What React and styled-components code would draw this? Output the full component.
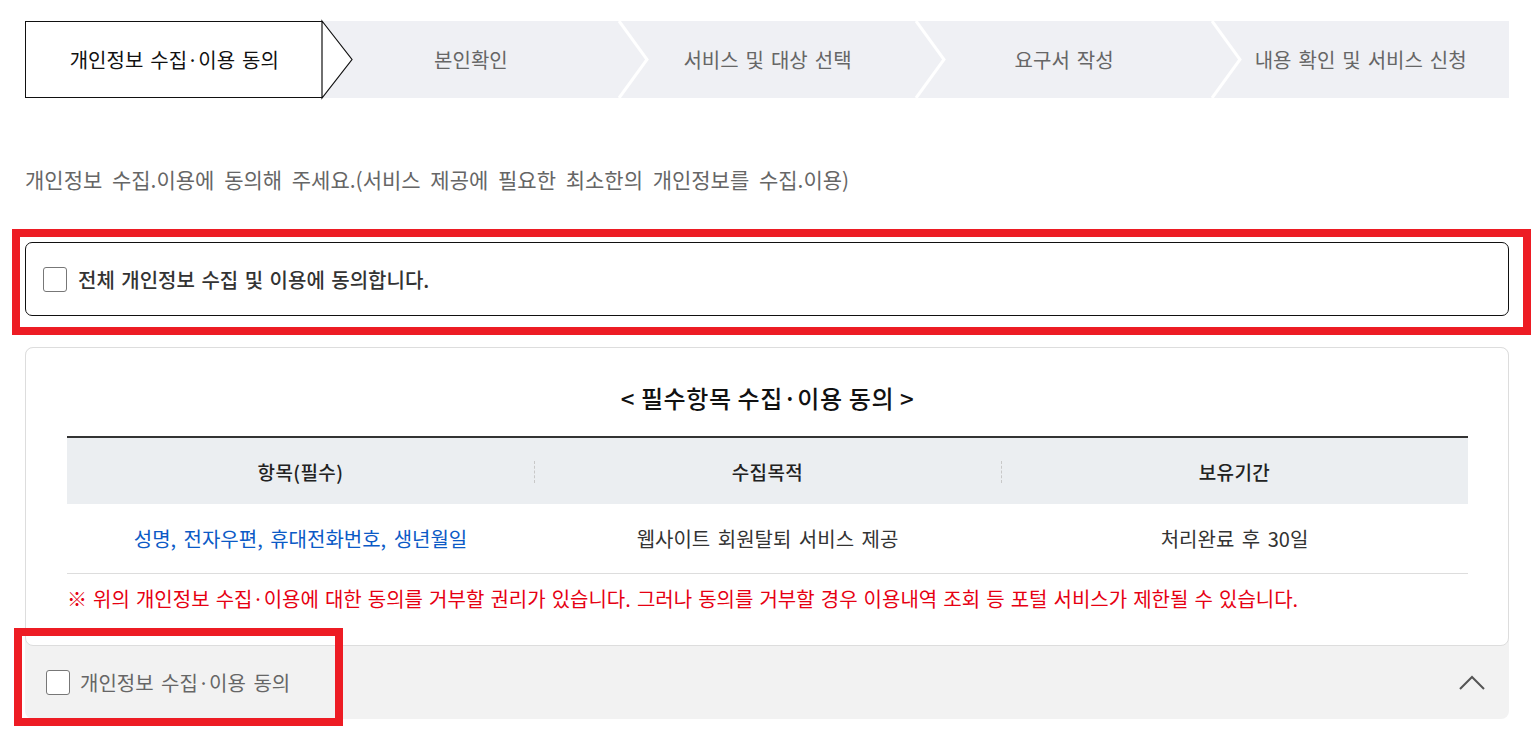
import React from "react";
import styled, { createGlobalStyle } from "styled-components";

const GlobalStyle = createGlobalStyle`
  html, body { margin: 0; padding: 0; background: #fff; }
  body { font-family: "Noto Sans CJK KR", "Noto Sans", sans-serif; color: #333; }
  * { box-sizing: border-box; }
`;

const Root = styled.div`
  position: relative;
  width: 1539px;
  padding: 21px 30px 11px 25px;
`;

const Steps = styled.ol`
  display: flex;
  margin: 0;
  padding: 0;
  list-style: none;
  height: 77px;
  background: #eff0f4;
`;

const Step = styled.li`
  position: relative;
  flex: 1;
  display: flex;
  align-items: center;
  justify-content: center;
  font-size: 20px;
  letter-spacing: 0;
  word-spacing: 2.5px;
  color: ${(p) => (p.$active ? "#111" : "#666")};
  background: ${(p) => (p.$active ? "#fff" : "transparent")};
  border: ${(p) => (p.$active ? "1px solid #111" : "none")};
  border-right: none;
`;

const Chevron = styled.svg`
  position: absolute;
  top: ${(p) => (p.$active ? "-1px" : "0")};
  right: -31px;
  width: 32px;
  height: 77px;
  z-index: 2;
  overflow: visible;
`;

const Intro = styled.p`
  margin: 67px 0 0;
  font-size: 21px;
  line-height: 28px;
  letter-spacing: 0;
  word-spacing: 5px;
  color: #666;
`;

const AllBox = styled.label`
  display: flex;
  align-items: center;
  gap: 11px;
  margin-top: 49px;
  height: 74px;
  padding: 0 17px;
  border: 1px solid #111;
  border-radius: 7px;
  font-size: 20px;
  font-weight: 500;
  letter-spacing: 0;
  word-spacing: 2px;
  color: #333;
`;

const Box = styled.span`
  flex: none;
  width: 24px;
  height: 25px;
  border: 1px solid #777;
  border-radius: 3px;
  background: #fff;
`;

const Accordion = styled.section`
  margin-top: 31px;
  background: #f2f2f2;
  border-radius: 8px;
`;

const Card = styled.div`
  background: #fff;
  border: 1px solid #ddd;
  border-radius: 8px;
  padding: 35px 40px 32px 41px;
`;

const Title = styled.h3`
  margin: 0;
  text-align: center;
  font-size: 24px;
  line-height: 30px;
  font-weight: 500;
  letter-spacing: 0.6px;
  color: #111;
`;

const Table = styled.div`
  margin-top: 23px;
  border-top: 2px solid #333;
`;

const Row = styled.div`
  display: grid;
  grid-template-columns: 1fr 1fr 1fr;
  height: ${(p) => (p.$head ? "66px" : "70px")};
  background: ${(p) => (p.$head ? "#ebeef1" : "#fff")};
  border-bottom: ${(p) => (p.$head ? "none" : "1px solid #ddd")};
`;

const Cell = styled.div`
  position: relative;
  display: flex;
  align-items: center;
  justify-content: center;
  font-size: ${(p) => (p.$head ? "19px" : "20px")};
  font-weight: ${(p) => (p.$head ? 500 : 400)};
  letter-spacing: ${(p) => (p.$head ? "0.4px" : "0")};
  word-spacing: 3px;
  color: ${(p) => (p.$blue ? "#0b5ac6" : p.$head ? "#222" : "#333")};

  ${(p) =>
    p.$divider &&
    `&::before {
      content: "";
      position: absolute;
      left: 0;
      top: 23px;
      height: 22px;
      border-left: 1px dashed #c8c8c8;
    }`}
`;

const Note = styled.p`
  margin: 11px 0 0;
  font-size: 20px;
  line-height: 28px;
  letter-spacing: 0;
  word-spacing: 1.6px;
  color: #e60012;
`;

const AccHeader = styled.div`
  display: flex;
  align-items: center;
  height: 73px;
  padding: 0 24px 0 21px;
  gap: 10px;
  font-size: 20px;
  letter-spacing: 0;
  word-spacing: 3px;
  color: #666;
`;

const AccLabel = styled.span`
  flex: 1;
`;

const Mark = styled.div`
  position: absolute;
  left: ${(p) => p.$x}px;
  top: ${(p) => p.$y}px;
  width: ${(p) => p.$w}px;
  height: ${(p) => p.$h}px;
  border: 8px solid #ed1c24;
  pointer-events: none;
`;

const steps = [
  "개인정보 수집·이용 동의",
  "본인확인",
  "서비스 및 대상 선택",
  "요구서 작성",
  "내용 확인 및 서비스 신청",
];

export default function App() {
  return (
    <>
      <GlobalStyle />
      <Root>
        <Steps>
          {steps.map((s, i) => (
            <Step key={s} $active={i === 0}>
              {s}
              {i < steps.length - 1 &&
                (i === 0 ? (
                  <Chevron $active viewBox="0 0 32 77">
                    <polygon points="0,0 30,38.5 0,77" fill="#fff" stroke="#111" strokeWidth="1.2" />
                  </Chevron>
                ) : (
                  <Chevron viewBox="0 0 32 77">
                    <polyline points="1,0 29,38.5 1,77" fill="none" stroke="#fff" strokeWidth="3" />
                  </Chevron>
                ))}
            </Step>
          ))}
        </Steps>

        <Intro>개인정보 수집.이용에 동의해 주세요.(서비스 제공에 필요한 최소한의 개인정보를 수집.이용)</Intro>

        <AllBox>
          <Box />
          전체 개인정보 수집 및 이용에 동의합니다.
        </AllBox>

        <Accordion>
          <Card>
            <Title>&lt; 필수항목 수집·이용 동의 &gt;</Title>
            <Table>
              <Row $head>
                <Cell $head>항목(필수)</Cell>
                <Cell $head $divider>수집목적</Cell>
                <Cell $head $divider>보유기간</Cell>
              </Row>
              <Row>
                <Cell $blue>성명, 전자우편, 휴대전화번호, 생년월일</Cell>
                <Cell>웹사이트 회원탈퇴 서비스 제공</Cell>
                <Cell>처리완료 후 30일</Cell>
              </Row>
            </Table>
            <Note>※ 위의 개인정보 수집·이용에 대한 동의를 거부할 권리가 있습니다. 그러나 동의를 거부할 경우 이용내역 조회 등 포털 서비스가 제한될 수 있습니다.</Note>
          </Card>
          <AccHeader>
            <Box />
            <AccLabel>개인정보 수집·이용 동의</AccLabel>
            <svg width="26" height="16" viewBox="0 0 26 16">
              <polyline points="1,14 13,2 25,14" fill="none" stroke="#555" strokeWidth="2" />
            </svg>
          </AccHeader>
        </Accordion>

        <Mark $x={12} $y={229} $w={1519} $h={106} />
        <Mark $x={14} $y={628} $w={329} $h={98} />
      </Root>
    </>
  );
}
